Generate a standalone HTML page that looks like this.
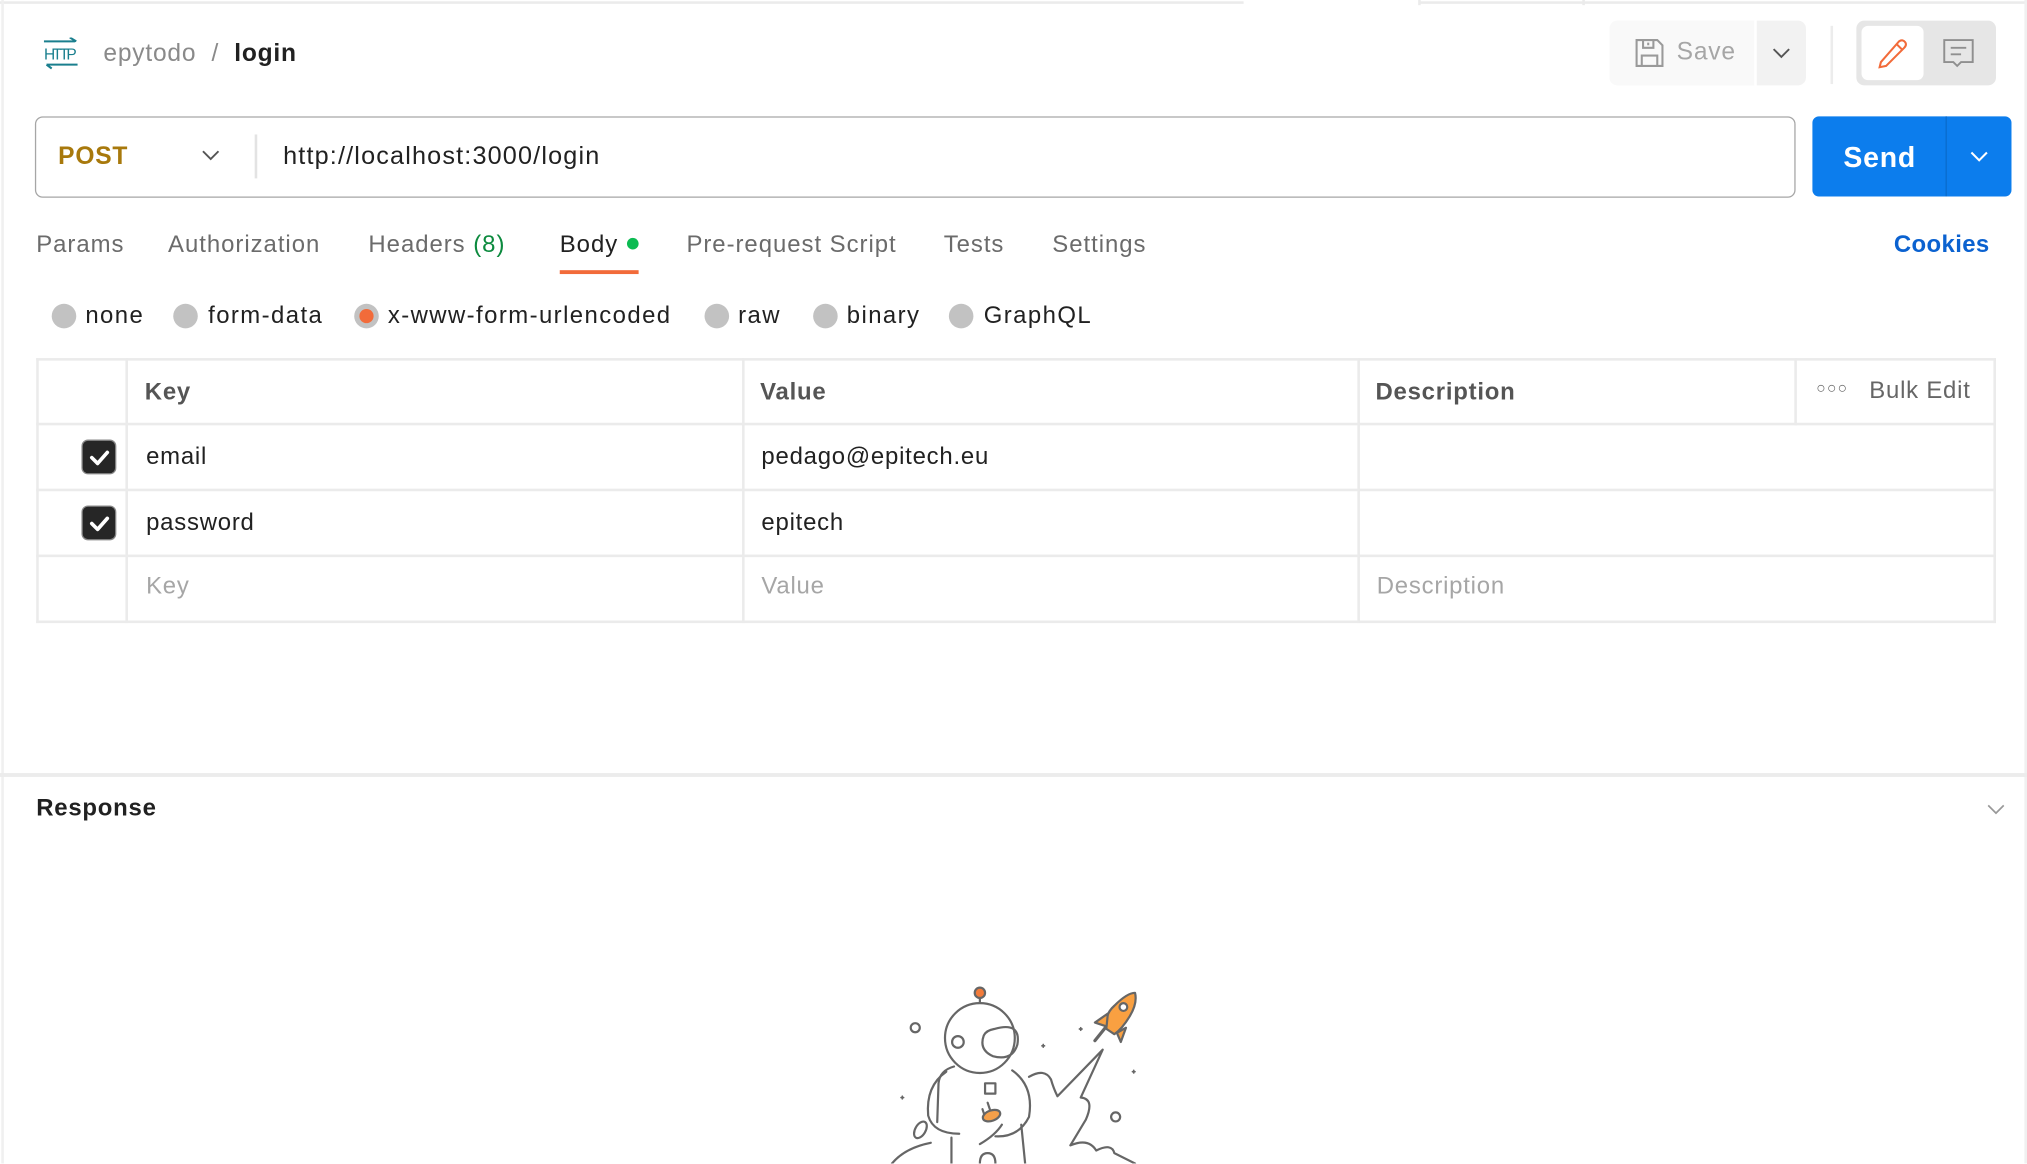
<!DOCTYPE html>
<html><head><meta charset="utf-8">
<style>
html,body{margin:0;padding:0;background:#fff;overflow:hidden;}
body{width:2027px;height:1164px;}
#s{position:absolute;left:0;top:0;width:1568px;height:900px;transform:scale(1.29273);transform-origin:0 0;font-family:"Liberation Sans",sans-serif;color:#212121;letter-spacing:0.6px;}
.a{position:absolute;white-space:nowrap;}
.t{font-size:18.5px;color:#6b6b6b;top:178px;letter-spacing:0.75px;}
.r{position:absolute;top:235px;width:19px;height:19px;border-radius:50%;background:#c2c2c2;}
.rl{font-size:18.5px;top:233px;color:#212121;letter-spacing:1.1px;}
.hl{position:absolute;background:#ebebeb;height:2px;}
.vl{position:absolute;background:#ebebeb;width:2px;}
.cb{position:absolute;left:64px;width:25px;height:25px;border-radius:4px;background:#262626;box-shadow:0 0 0 1px #888;}
.td{font-size:18.5px;color:#212121;}
</style></head><body><div id="s">
<div class="hl" style="left:0;top:1px;width:962px;"></div>
<div class="hl" style="left:1098px;top:1px;width:470px;"></div>
<div class="vl" style="left:1097px;top:0;height:4px;"></div>
<div class="vl" style="left:1224px;top:0;height:4px;"></div>
<div class="vl" style="left:1px;top:0;height:900px;width:2px;background:#f0f0f0"></div>
<div class="vl" style="left:1566px;top:0;height:900px;width:2px;background:#f0f0f0"></div>

<svg class="a" style="left:33px;top:29px" width="29" height="25" viewBox="0 0 29 25"><path d="M1 3H25M21 0L26 3" stroke="#1a7f8e" stroke-width="1.6" fill="none"/><text x="1" y="17" font-size="12" font-family="Liberation Sans" fill="#1a7f8e" textLength="26">HTTP</text><path d="M3 21H27M3 21L7 24" stroke="#1a7f8e" stroke-width="1.6" fill="none"/></svg>
<div class="a" style="left:80px;top:31px;font-size:19px;color:#8a8a8a">epytodo&nbsp; /&nbsp; <span style="color:#212121;font-weight:bold">login</span></div>

<div class="a" style="left:1245px;top:16px;width:112px;height:50px;background:#f9f9f9;border-radius:6px 0 0 6px"></div>
<svg class="a" style="left:1264px;top:29px" width="24" height="24" viewBox="0 0 24 24" fill="none" stroke="#9a9a9a" stroke-width="1.6"><path d="M2 2H18L22 6V22H2Z"/><path d="M7 2V8H15V2M11 4V6"/><path d="M6 22V14H18V22"/></svg>
<div class="a" style="left:1297px;top:30px;font-size:19px;color:#a6a6a6">Save</div>
<div class="a" style="left:1359px;top:16px;width:38px;height:50px;background:#f2f2f2;border-radius:0 6px 6px 0"></div>
<svg class="a" style="left:1370px;top:35px" width="16" height="12"><path d="M2 3L8 9L14 3" stroke="#555" stroke-width="1.5" fill="none"/></svg>
<div class="vl" style="left:1416px;top:20px;height:45px;background:#ececec"></div>
<div class="a" style="left:1436px;top:16px;width:108px;height:50px;background:#e6e6e6;border-radius:6px"></div>
<div class="a" style="left:1440px;top:20px;width:48px;height:42px;background:#fff;border-radius:5px"></div>
<svg class="a" style="left:1451px;top:28px" width="26" height="26" viewBox="0 0 26 26" fill="none" stroke="#f26b3a" stroke-width="1.6"><path d="M4 20L18 4Q21 2 23 5Q24 7 22 9L8 23L3 24Z M16 6L21 11"/></svg>
<svg class="a" style="left:1503px;top:30px" width="24" height="24" viewBox="0 0 24 24" fill="none" stroke="#8f8f8f" stroke-width="1.5"><path d="M1 1H23V18H14L11 21L8 18H1Z M6 7H18M6 12H14"/></svg>

<div class="a" style="left:27px;top:90px;width:1360px;height:61px;border:1.5px solid #a6a6a6;border-radius:6px"></div>
<div class="a" style="left:45px;top:111px;font-size:19px;font-weight:bold;color:#a8790c">POST</div>
<svg class="a" style="left:155px;top:114px" width="16" height="12"><path d="M2 3L8 9L14 3" stroke="#555" stroke-width="1.5" fill="none"/></svg>
<div class="vl" style="left:197px;top:104px;height:34px;background:#e3e3e3"></div>
<div class="a" style="left:219px;top:110px;font-size:19.5px;color:#212121;letter-spacing:0.9px">http://localhost:3000/login</div>
<div class="a" style="left:1402px;top:90px;width:154px;height:62px;background:#0c7ded;border-radius:5px"></div>
<div class="vl" style="left:1505px;top:90px;height:62px;width:1px;background:#0a6ccd"></div>
<div class="a" style="left:1426px;top:109px;font-size:22px;font-weight:bold;color:#fff">Send</div>
<svg class="a" style="left:1523px;top:115px" width="16" height="12"><path d="M2 3L8 9L14 3" stroke="#fff" stroke-width="1.6" fill="none"/></svg>

<div class="a t" style="left:28px">Params</div>
<div class="a t" style="left:130px">Authorization</div>
<div class="a t" style="left:285px">Headers <span style="color:#0c8a3e">(8)</span></div>
<div class="a t" style="left:433px;color:#212121">Body</div>
<div class="a" style="left:485px;top:184px;width:9px;height:9px;border-radius:50%;background:#0cbb52"></div>
<div class="a" style="left:433px;top:209px;width:61px;height:3px;background:#f26b3a"></div>
<div class="a t" style="left:531px">Pre-request Script</div>
<div class="a t" style="left:730px">Tests</div>
<div class="a t" style="left:814px">Settings</div>
<div class="a t" style="left:1465px;color:#0b62d0;font-weight:bold;letter-spacing:0.3px">Cookies</div>

<div class="r" style="left:40px"></div><div class="a rl" style="left:66px">none</div>
<div class="r" style="left:134px"></div><div class="a rl" style="left:161px">form-data</div>
<div class="r" style="left:274px"></div><div class="a" style="left:278px;top:239px;width:11px;height:11px;border-radius:50%;background:#f26b3a"></div><div class="a rl" style="left:300px">x-www-form-urlencoded</div>
<div class="r" style="left:545px"></div><div class="a rl" style="left:571px">raw</div>
<div class="r" style="left:629px"></div><div class="a rl" style="left:655px">binary</div>
<div class="r" style="left:734px"></div><div class="a rl" style="left:761px">GraphQL</div>

<div class="hl" style="left:28px;top:277px;width:1516px"></div>
<div class="hl" style="left:28px;top:327px;width:1516px"></div>
<div class="hl" style="left:28px;top:378px;width:1516px"></div>
<div class="hl" style="left:28px;top:429px;width:1516px"></div>
<div class="hl" style="left:28px;top:480px;width:1516px"></div>
<div class="vl" style="left:28px;top:277px;height:205px"></div>
<div class="vl" style="left:97px;top:277px;height:205px"></div>
<div class="vl" style="left:574px;top:277px;height:205px"></div>
<div class="vl" style="left:1050px;top:277px;height:205px"></div>
<div class="vl" style="left:1388px;top:277px;height:52px"></div>
<div class="vl" style="left:1542px;top:277px;height:205px"></div>
<div class="a" style="left:112px;top:292px;font-size:18.5px;font-weight:bold;color:#555">Key</div>
<div class="a" style="left:588px;top:292px;font-size:18.5px;font-weight:bold;color:#555">Value</div>
<div class="a" style="left:1064px;top:292px;font-size:18.5px;font-weight:bold;color:#555">Description</div>
<div class="a" style="left:1405px;top:293px;font-size:12px;color:#666;letter-spacing:1px">○○○</div>
<div class="a" style="left:1446px;top:291px;font-size:18.5px;color:#666">Bulk Edit</div>

<div class="cb" style="top:341px"></div>
<svg class="a" style="left:67px;top:344px" width="20" height="20"><path d="M4 10L8.5 14.5L16 6" stroke="#fff" stroke-width="2.8" fill="none" stroke-linecap="round" stroke-linejoin="round"/></svg>
<div class="a td" style="left:113px;top:342px">email</div>
<div class="a td" style="left:589px;top:342px">pedago@epitech.eu</div>
<div class="cb" style="top:392px"></div>
<svg class="a" style="left:67px;top:395px" width="20" height="20"><path d="M4 10L8.5 14.5L16 6" stroke="#fff" stroke-width="2.8" fill="none" stroke-linecap="round" stroke-linejoin="round"/></svg>
<div class="a td" style="left:113px;top:393px">password</div>
<div class="a td" style="left:589px;top:393px">epitech</div>
<div class="a td" style="left:113px;top:442px;color:#a6a6a6">Key</div>
<div class="a td" style="left:589px;top:442px;color:#a6a6a6">Value</div>
<div class="a td" style="left:1065px;top:442px;color:#a6a6a6">Description</div>

<div class="hl" style="left:0;top:598px;width:1568px;height:3px;background:#ececec"></div>
<div class="a" style="left:28px;top:614px;font-size:18.5px;font-weight:bold;color:#212121">Response</div>
<svg class="a" style="left:1536px;top:620px" width="16" height="12"><path d="M2 3L8 9L14 3" stroke="#999" stroke-width="1.3" fill="none"/></svg>

<svg class="a" style="left:657px;top:742px" width="248" height="158" viewBox="657 742 248 158" fill="none" stroke="#666" stroke-width="1.7" stroke-linecap="round" stroke-linejoin="round">
<circle cx="758" cy="768" r="4" fill="#f37b3a" stroke="#666"/>
<path d="M758 772V777"/>
<circle cx="758" cy="803" r="27" fill="#fff"/>
<path d="M769 796Q790 790 787 808Q783 821 768 817Q757 812 761 801Q763 797 769 796Z"/>
<circle cx="741" cy="806" r="4.5"/>
<circle cx="708" cy="795" r="3.5"/>
<path d="M738 825Q727 828 726 838L725 868"/>
<path d="M732 829Q716 840 718 863Q722 877 742 877"/>
<path d="M783 828Q800 840 796 864Q788 880 770 879"/>
<path d="M758 885Q770 878 775 870"/>
<rect x="762" y="838" width="8" height="8"/>
<path d="M760 858L762 864M764 853L767 862"/>
<ellipse cx="767" cy="863" rx="7" ry="4" fill="#f5a04a" stroke="#666" transform="rotate(-20 767 863)"/>
<path d="M736 880V900M790 870L793 900"/>
<ellipse cx="712" cy="874" rx="4" ry="7" transform="rotate(30 712 874)"/>
<path d="M690 900Q700 888 720 884"/>
<path d="M758 900Q758 892 764 892Q770 892 770 900"/>
<path d="M796 833Q808 826 813 835Q815 842 818 848L853 812L836 849Q847 850 840 866L828 886Q842 880 848 890Q860 884 862 892L878 900"/>
<circle cx="863" cy="864" r="3.5"/>
<path d="M697 849h2M698 848v2M806 809h2M807 808v2M876 829h2M877 828v2M835 796h2M836 795v2" stroke-width="1.3"/>
<path d="M855 795L847 805" stroke-width="2.5"/>
<path d="M856 796Q854 785 862 778Q872 768 878 768Q880 776 874 786Q868 796 862 800Z" fill="#f9a041" stroke="#666"/>
<path d="M857 784L847 791L856 794Z M864 799L867 806L871 795Z" fill="#f9a041" stroke="#666"/>
<circle cx="869" cy="779" r="3" fill="#fff"/>
</svg>
</div></body></html>
